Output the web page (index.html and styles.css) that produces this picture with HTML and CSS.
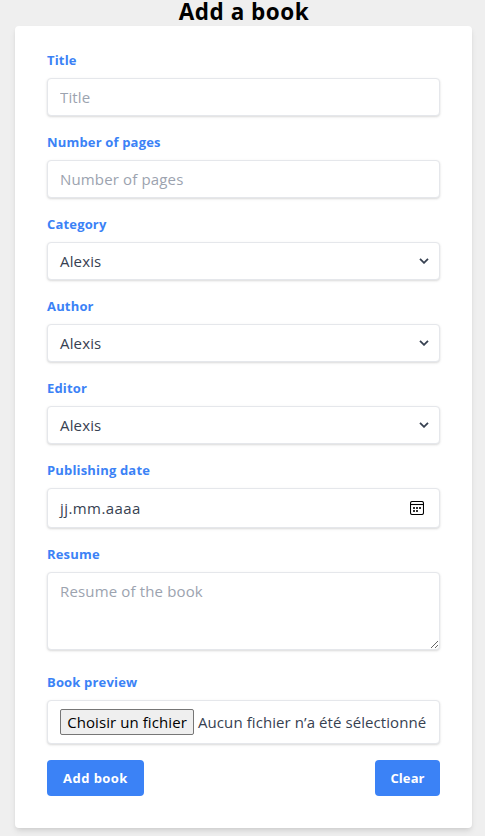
FILE: index.html
```html
<!DOCTYPE html>
<html lang="en">
<head>
<meta charset="utf-8">
<title>Add a book</title>
<link rel="stylesheet" href="styles.css">
</head>
<body>
<h1 class="heading"><span>Add a book</span></h1>
<form class="card">
  <div class="field">
    <label class="label" for="title">Title</label>
    <input class="control" id="title" type="text" placeholder="Title">
  </div>
  <div class="field">
    <label class="label" for="pages">Number of pages</label>
    <input class="control" id="pages" type="text" placeholder="Number of pages">
  </div>
  <div class="field">
    <label class="label">Category</label>
    <div class="control select"><span>Alexis</span><svg class="chevron" viewBox="0 0 10 6"><path d="M1 .8 5 4.8 9 .8"/></svg></div>
  </div>
  <div class="field">
    <label class="label">Author</label>
    <div class="control select"><span>Alexis</span><svg class="chevron" viewBox="0 0 10 6"><path d="M1 .8 5 4.8 9 .8"/></svg></div>
  </div>
  <div class="field">
    <label class="label">Editor</label>
    <div class="control select"><span>Alexis</span><svg class="chevron" viewBox="0 0 10 6"><path d="M1 .8 5 4.8 9 .8"/></svg></div>
  </div>
  <div class="field">
    <label class="label">Publishing date</label>
    <div class="control date"><span class="date-text">jj.mm.aaaa</span>
      <svg class="calendar" viewBox="0 0 14 14"><rect class="frame" x=".5" y=".5" width="13" height="13" rx="1.8"/><path class="frame" d="M.5 3.5h13"/><path class="dots" d="M3 6h2v2H3zM6 6h2v2H6zM9 6h2v2H9zM3 9h2v2H3zM6 9h2v2H6z"/></svg>
    </div>
  </div>
  <div class="field field-resume">
    <label class="label" for="resume">Resume</label>
    <textarea class="control area" id="resume" placeholder="Resume of the book"></textarea>
  </div>
  <div class="field">
    <label class="label">Book preview</label>
    <div class="control file"><span class="file-button"><span>Choisir un fichier</span></span><span class="file-text">Aucun fichier n’a été sélectionné</span></div>
  </div>
  <div class="actions">
    <button class="button add" type="button">Add book</button>
    <button class="button clear" type="button">Clear</button>
  </div>
</form>
</body>
</html>
```
FILE: styles.css
```css
* { box-sizing: border-box; }

body {
  margin: 0;
  height: 836px;
  overflow: hidden;
  background: #efefef;
  font-family: "Open Sans", "Noto Sans", sans-serif;
}

.heading {
  margin: 0;
  height: 26px;
  padding-left: 3px;
  font-size: 22.5px;
  line-height: 23px;
  font-weight: 700;
  letter-spacing: .5px;
  text-align: center;
  color: #000;
}

.card {
  margin: 0 13px 0 15px;
  padding: 24px 32px 32px;
  height: 802px;
  background: #fff;
  border-radius: 4px;
  box-shadow: 0 4px 6px -1px rgba(0, 0, 0, .1), 0 2px 4px -1px rgba(0, 0, 0, .06);
}

.field { margin-bottom: 16px; }
.field-resume { margin-bottom: 22px; }

.label {
  display: block;
  height: 20px;
  margin-bottom: 8px;
  font-size: 13px;
  line-height: 20px;
  font-weight: 700;
  letter-spacing: .17px;
  color: #3b82f6;
}

.control {
  display: block;
  width: 100%;
  height: 38px;
  padding: 0 11px 0 12px;
  border: 1px solid #e5e7eb;
  border-radius: 4px;
  background: #fff;
  box-shadow: 0 1px 3px rgba(0, 0, 0, .1), 0 1px 2px rgba(0, 0, 0, .06);
  font: 15px/20px "Open Sans", "Noto Sans", sans-serif;
  letter-spacing: .15px;
  color: #374151;
  white-space: nowrap;
}

.control::placeholder { color: #9ca3af; opacity: 1; }

.select, .date, .file {
  display: flex;
  align-items: center;
  justify-content: space-between;
}

.chevron {
  width: 10px;
  height: 6px;
  margin-right: -1px;
  fill: none;
  stroke: #374151;
  stroke-width: 1.8;
}

.date { height: 40px; }
.date-text { letter-spacing: .42px; }

.calendar {
  width: 14px;
  height: 14px;
  margin-right: 4px;
}
.frame { fill: none; stroke: #000; stroke-width: 1.1; }
.dots { fill: #333; }

.area {
  height: 78px;
  padding-top: 8px;
  resize: vertical;
}

.file {
  height: 44px;
  justify-content: flex-start;
  gap: 4px;
  letter-spacing: .08px;
}

.file-button {
  flex: none;
  width: 134px;
  height: 26px;
  border: 1px solid #767676;
  border-radius: 2px;
  background: #efefef;
  color: #000;
  line-height: 24px;
  text-align: center;
}

.actions { display: flex; justify-content: space-between; }

.button {
  height: 36px;
  padding: 0;
  border: 0;
  border-radius: 4px;
  background: #3b82f6;
  color: #fff;
  font: 700 13px/20px "Open Sans", "Noto Sans", sans-serif;
}
.add { width: 97px; letter-spacing: .45px; }
.clear { width: 65px; letter-spacing: .1px; }
```
